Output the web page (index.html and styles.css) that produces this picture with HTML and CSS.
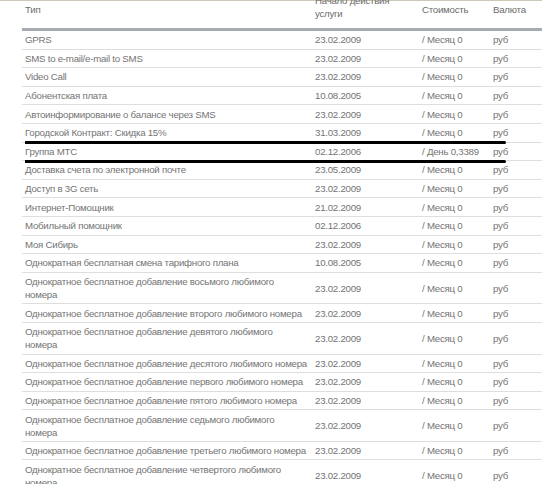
FILE: index.html
```html
<!DOCTYPE html>
<html lang="ru">
<head>
<meta charset="utf-8">
<title>Услуги</title>
<link rel="stylesheet" href="styles.css">
</head>
<body>
<div class="frame">
  <table class="services">
    <colgroup>
      <col class="c-type">
      <col class="c-date">
      <col class="c-cost">
      <col class="c-cur">
    </colgroup>
    <thead>
      <tr>
        <th class="single">Тип</th>
        <th>Начало действия<br>услуги</th>
        <th class="single">Стоимость</th>
        <th class="single">Валюта</th>
      </tr>
    </thead>
    <tbody>
      <tr><td>GPRS</td><td>23.02.2009</td><td>/ Месяц 0</td><td>руб</td></tr>
      <tr><td>SMS to e-mail/e-mail to SMS</td><td>23.02.2009</td><td>/ Месяц 0</td><td>руб</td></tr>
      <tr><td>Video Call</td><td>23.02.2009</td><td>/ Месяц 0</td><td>руб</td></tr>
      <tr><td>Абонентская плата</td><td>10.08.2005</td><td>/ Месяц 0</td><td>руб</td></tr>
      <tr><td>Автоинформирование о балансе через SMS</td><td>23.02.2009</td><td>/ Месяц 0</td><td>руб</td></tr>
      <tr><td>Городской Контракт: Скидка 15%</td><td>31.03.2009</td><td>/ Месяц 0</td><td>руб</td></tr>
      <tr><td class="marked">Группа МТС</td><td>02.12.2006</td><td>/ День 0,3389</td><td>руб</td></tr>
      <tr><td>Доставка счета по электронной почте</td><td>23.05.2009</td><td>/ Месяц 0</td><td>руб</td></tr>
      <tr><td>Доступ в 3G сеть</td><td>23.02.2009</td><td>/ Месяц 0</td><td>руб</td></tr>
      <tr><td>Интернет-Помощник</td><td>21.02.2009</td><td>/ Месяц 0</td><td>руб</td></tr>
      <tr><td>Мобильный помощник</td><td>02.12.2006</td><td>/ Месяц 0</td><td>руб</td></tr>
      <tr><td>Моя Сибирь</td><td>23.02.2009</td><td>/ Месяц 0</td><td>руб</td></tr>
      <tr><td>Однократная бесплатная смена тарифного плана</td><td>10.08.2005</td><td>/ Месяц 0</td><td>руб</td></tr>
      <tr><td>Однократное бесплатное добавление восьмого любимого<br>номера</td><td>23.02.2009</td><td>/ Месяц 0</td><td>руб</td></tr>
      <tr><td>Однократное бесплатное добавление второго любимого номера</td><td>23.02.2009</td><td>/ Месяц 0</td><td>руб</td></tr>
      <tr><td>Однократное бесплатное добавление девятого любимого<br>номера</td><td>23.02.2009</td><td>/ Месяц 0</td><td>руб</td></tr>
      <tr><td>Однократное бесплатное добавление десятого любимого номера</td><td>23.02.2009</td><td>/ Месяц 0</td><td>руб</td></tr>
      <tr><td>Однократное бесплатное добавление первого любимого номера</td><td>23.02.2009</td><td>/ Месяц 0</td><td>руб</td></tr>
      <tr><td>Однократное бесплатное добавление пятого любимого номера</td><td>23.02.2009</td><td>/ Месяц 0</td><td>руб</td></tr>
      <tr><td>Однократное бесплатное добавление седьмого любимого<br>номера</td><td>23.02.2009</td><td>/ Месяц 0</td><td>руб</td></tr>
      <tr><td>Однократное бесплатное добавление третьего любимого номера</td><td>23.02.2009</td><td>/ Месяц 0</td><td>руб</td></tr>
      <tr><td>Однократное бесплатное добавление четвертого любимого<br>номера</td><td>23.02.2009</td><td>/ Месяц 0</td><td>руб</td></tr>
    </tbody>
  </table>
</div>
</body>
</html>
```
FILE: styles.css
```css
html, body {
  margin: 0;
  padding: 0;
  background: #ffffff;
  overflow: hidden;
}

body {
  font-family: "Liberation Sans", Arial, sans-serif;
  font-size: 9.7px;
  letter-spacing: -0.25px;
  color: #747474;
}

.frame {
  border-top: 1px solid #cdc8b5;
  padding-left: 22px;
}

.services {
  margin-top: -7.5px;
  width: 520px;
  table-layout: fixed;
  border-collapse: collapse;
  border-spacing: 0;
}

.c-type { width: 290px; }
.c-date { width: 107px; }
.c-cost { width: 71px; }
.c-cur  { width: 52px; }

.services th {
  text-align: left;
  font-weight: normal;
  color: #6c6c6c;
  line-height: 13px;
  padding: 0 3px 8.5px;
  vertical-align: middle;
  border-bottom: 3px solid #a5abb1;
}

.services th.single {
  padding-top: 6px;
}

.services td {
  line-height: 13px;
  padding: 2.3px 3px;
  vertical-align: middle;
  white-space: nowrap;
  border-bottom: 1px solid #dedede;
}

.services td.marked {
  position: relative;
}

.services td.marked::before,
.services td.marked::after {
  content: "";
  position: absolute;
  left: 3px;
  width: 481px;
  height: 3px;
  background: #000000;
  border-radius: 0 2px 2px 0;
}

.services td.marked::before {
  top: -2px;
}

.services td.marked::after {
  bottom: -3px;
}
```
